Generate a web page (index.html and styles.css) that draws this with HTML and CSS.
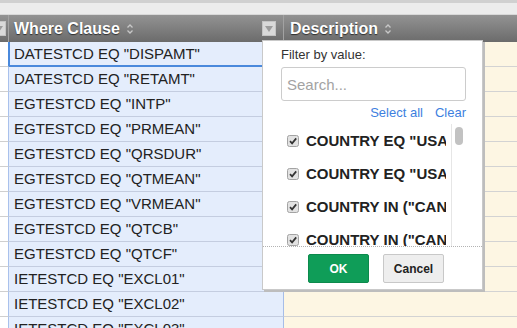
FILE: index.html
```html
<html lang="en">
<head>
  <meta charset="UTF-8">
  <title>Where Clause Filter</title>
  <link rel="stylesheet" href="styles.css">
</head>
<body>
  <div class="topbar"></div>
  <div class="grid">
    <div class="head">
      <div class="hcell c0"><span class="fbtn"><svg width="12" height="13" viewBox="0 0 12 13"><polygon points="2,4 10,4 6,10" fill="#9c9c9c"/></svg></span></div>
      <div class="hcell c1">
        <span>Where Clause</span>
        <svg class="sort" width="8" height="12" viewBox="0 0 8 12"><path d="M1.5 4.5 L4 2 L6.5 4.5 M1.5 7.5 L4 10 L6.5 7.5" fill="none" stroke="#c8c8c8" stroke-width="1.3"/></svg>
        <span class="fbtn right"><svg width="12" height="13" viewBox="0 0 12 13"><polygon points="2,4 10,4 6,10" fill="#9c9c9c"/></svg></span>
      </div>
      <div class="hcell c2">
        <span>Description</span>
        <svg class="sort" width="8" height="12" viewBox="0 0 8 12"><path d="M1.5 4.5 L4 2 L6.5 4.5 M1.5 7.5 L4 10 L6.5 7.5" fill="none" stroke="#c8c8c8" stroke-width="1.3"/></svg>
      </div>
    </div>

    <div class="row sel"><div class="cell c0"></div><div class="cell c1">DATESTCD EQ "DISPAMT"</div><div class="cell c2"></div></div>
    <div class="row"><div class="cell c0"></div><div class="cell c1">DATESTCD EQ "RETAMT"</div><div class="cell c2"></div></div>
    <div class="row"><div class="cell c0"></div><div class="cell c1">EGTESTCD EQ "INTP"</div><div class="cell c2"></div></div>
    <div class="row"><div class="cell c0"></div><div class="cell c1">EGTESTCD EQ "PRMEAN"</div><div class="cell c2"></div></div>
    <div class="row"><div class="cell c0"></div><div class="cell c1">EGTESTCD EQ "QRSDUR"</div><div class="cell c2"></div></div>
    <div class="row"><div class="cell c0"></div><div class="cell c1">EGTESTCD EQ "QTMEAN"</div><div class="cell c2"></div></div>
    <div class="row"><div class="cell c0"></div><div class="cell c1">EGTESTCD EQ "VRMEAN"</div><div class="cell c2"></div></div>
    <div class="row"><div class="cell c0"></div><div class="cell c1">EGTESTCD EQ "QTCB"</div><div class="cell c2"></div></div>
    <div class="row"><div class="cell c0"></div><div class="cell c1">EGTESTCD EQ "QTCF"</div><div class="cell c2"></div></div>
    <div class="row"><div class="cell c0"></div><div class="cell c1">IETESTCD EQ "EXCL01"</div><div class="cell c2"></div></div>
    <div class="row"><div class="cell c0"></div><div class="cell c1">IETESTCD EQ "EXCL02"</div><div class="cell c2"></div></div>
    <div class="row"><div class="cell c0"></div><div class="cell c1">IETESTCD EQ "EXCL03"</div><div class="cell c2"></div></div>
  </div>

  <div class="popup">
    <div class="pbody">
      <div class="plabel">Filter by value:</div>
      <input class="search" type="text" placeholder="Search...">
      <div class="links"><a>Select all</a><a class="clear">Clear</a></div>
      <div class="list">
        <div class="items">
          <div class="item"><svg class="cb" width="12" height="12" viewBox="0 0 12 12"><rect x="0.5" y="0.5" width="11" height="11" rx="2" fill="#e2e2e2" stroke="#a3a3a3"/><path d="M3 6.2 L5.1 8.4 L9.2 3.4" fill="none" stroke="#333" stroke-width="1.7"/></svg><span>COUNTRY EQ "USA"</span></div>
          <div class="item"><svg class="cb" width="12" height="12" viewBox="0 0 12 12"><rect x="0.5" y="0.5" width="11" height="11" rx="2" fill="#e2e2e2" stroke="#a3a3a3"/><path d="M3 6.2 L5.1 8.4 L9.2 3.4" fill="none" stroke="#333" stroke-width="1.7"/></svg><span>COUNTRY EQ "USA"</span></div>
          <div class="item"><svg class="cb" width="12" height="12" viewBox="0 0 12 12"><rect x="0.5" y="0.5" width="11" height="11" rx="2" fill="#e2e2e2" stroke="#a3a3a3"/><path d="M3 6.2 L5.1 8.4 L9.2 3.4" fill="none" stroke="#333" stroke-width="1.7"/></svg><span>COUNTRY IN ("CAN")</span></div>
          <div class="item"><svg class="cb" width="12" height="12" viewBox="0 0 12 12"><rect x="0.5" y="0.5" width="11" height="11" rx="2" fill="#e2e2e2" stroke="#a3a3a3"/><path d="M3 6.2 L5.1 8.4 L9.2 3.4" fill="none" stroke="#333" stroke-width="1.7"/></svg><span>COUNTRY IN ("CAN")</span></div>
        </div>
        <div class="track"><div class="thumb"></div></div>
      </div>
    </div>
    <div class="pfoot">
      <button class="ok">OK</button>
      <button class="cancel">Cancel</button>
    </div>
  </div>
</body>
</html>
```

FILE: styles.css
```css
* {
  box-sizing: border-box;
}

body {
  margin: 0;
  width: 517px;
  height: 328px;
  overflow: hidden;
  background: #fff;
  font-family: "Liberation Sans", Arial, sans-serif;
  position: relative;
}

.topbar {
  height: 15px;
  background: #ececec;
  border-top: 3px solid #d0d0d0;
  border-bottom: 1px solid #d8d8d8;
}

.head {
  display: flex;
  height: 27px;
  background: linear-gradient(#939393, #6b6b6b);
  color: #fff;
  font-size: 16px;
  font-weight: bold;
  text-shadow: 0 1px 1px #2e2e2e;
}

.hcell {
  display: flex;
  align-items: center;
  overflow: hidden;
  border-right: 1px solid #a2a2a2;
}

.c0 {
  width: 9px;
  flex: none;
}

.c1 {
  width: 275px;
  flex: none;
  padding-left: 5px;
}

.c2 {
  flex: 1;
  padding-left: 6px;
}

.head .c0 {
  justify-content: flex-end;
}

.head .c2 {
  border-right: none;
}

.sort {
  margin-left: 6px;
  flex: none;
}

.fbtn {
  flex: none;
  width: 14px;
  height: 15px;
  background: #d9d9d9;
  border: 1px solid #c4c4c4;
  display: flex;
  align-items: center;
  justify-content: center;
  margin-right: 2px;
}

.fbtn.right {
  margin-left: auto;
  margin-right: 7px;
}

.row {
  display: flex;
  height: 25px;
}

.cell {
  height: 25px;
  line-height: 24px;
  font-size: 15px;
  color: #222;
  white-space: nowrap;
  overflow: hidden;
}

.cell.c0 {
  background: #fff;
  border-bottom: 1px solid #cfcfcf;
  border-right: 1px solid #a9c1ec;
}

.cell.c1 {
  background: #e4edfc;
  border-bottom: 1px solid #c4cde0;
  border-right: 1px solid #a6bde8;
}

.cell.c2 {
  background: #fdf6e3;
  border-bottom: 1px solid #d3d3d3;
}

.sel .c0 {
  border-right-color: #4a89dc;
}

.sel .c1 {
  border-bottom: 2px solid #4a89dc;
  box-shadow: inset 1px 0 0 #4a89dc;
}

.popup {
  position: absolute;
  left: 262px;
  top: 40px;
  width: 221px;
  height: 250px;
  background: #fff;
  border: 1px solid #c9c9c9;
  box-shadow: 2px 2px 0 #bdbdbd;
}

.pbody {
  padding: 6px 16px 0 18px;
}

.plabel {
  font-size: 13px;
  line-height: 16px;
  color: #333;
}

.search {
  display: block;
  margin-top: 4px;
  width: 185px;
  height: 34px;
  border: 1px solid #cccccc;
  border-radius: 3px;
  padding: 0 5px;
  font-family: "Liberation Sans", Arial, sans-serif;
  font-size: 15px;
  color: #333;
  outline: none;
}

.search::placeholder {
  color: #a3a3a3;
}

.links {
  width: 185px;
  margin-top: 4px;
  text-align: right;
  font-size: 13px;
  line-height: 16px;
  color: #3d7fe0;
}

.links .clear {
  margin-left: 12px;
}

.list {
  display: flex;
  margin-top: 3px;
  height: 122px;
  overflow: hidden;
}

.items {
  width: 165px;
  overflow: hidden;
}

.item {
  display: flex;
  align-items: center;
  height: 33px;
  padding-left: 6px;
  white-space: nowrap;
  font-size: 15px;
  font-weight: bold;
  color: #222;
}

.cb {
  flex: none;
  margin-right: 7px;
}

.track {
  margin-left: 5px;
  width: 14px;
  border-left: 1px solid #e6e6e6;
  padding: 3px 0 0 3px;
}

.thumb {
  width: 8px;
  height: 18px;
  border-radius: 4px;
  background: #c2c2c2;
}

.pfoot {
  border-top: 1px dotted #b3b3b3;
  padding: 7px 0 0 45px;
  display: flex;
  gap: 14px;
}

.pfoot button {
  width: 61px;
  height: 29px;
  border-radius: 2px;
  font-family: "Liberation Sans", Arial, sans-serif;
  font-size: 12px;
  font-weight: bold;
}

.ok {
  background: #0f9d58;
  border: 1px solid #0c8a4c;
  color: #fff;
}

.cancel {
  background: #eeeeee;
  border: 1px solid #c8c8c8;
  color: #222;
}
```
